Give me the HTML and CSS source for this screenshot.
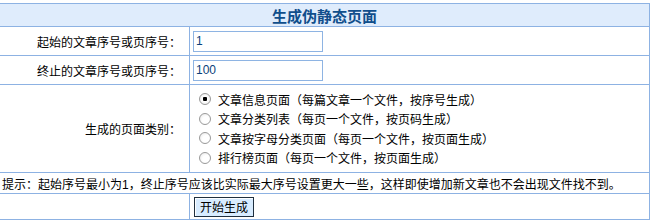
FILE: index.html
```html
<!DOCTYPE html>
<html lang="zh-CN">
<head>
    <meta charset="UTF-8">
    <title>生成伪静态页面</title>
    <link rel="stylesheet" href="styles.css">
</head>
<body>
    <form class="make-form">
        <table class="grid">
            <tr>
                <th colspan="2" class="title">生成伪静态页面</th>
            </tr>
            <tr class="row-field">
                <td class="label">起始的文章序号或页序号：</td>
                <td class="value"><input type="text" class="text" value="1"></td>
            </tr>
            <tr class="row-field">
                <td class="label">终止的文章序号或页序号：</td>
                <td class="value"><input type="text" class="text" value="100"></td>
            </tr>
            <tr class="row-types">
                <td class="label">生成的页面类别：</td>
                <td class="value">
                    <label class="opt"><input type="radio" name="type" checked><span>文章信息页面（每篇文章一个文件，按序号生成）</span></label>
                    <label class="opt"><input type="radio" name="type"><span>文章分类列表（每页一个文件，按页码生成）</span></label>
                    <label class="opt"><input type="radio" name="type"><span>文章按字母分类页面（每页一个文件，按页面生成）</span></label>
                    <label class="opt"><input type="radio" name="type"><span>排行榜页面（每页一个文件，按页面生成）</span></label>
                </td>
            </tr>
            <tr class="row-tip">
                <td colspan="2" class="tip">提示：起始序号最小为1，终止序号应该比实际最大序号设置更大一些，这样即使增加新文章也不会出现文件找不到。</td>
            </tr>
            <tr class="row-submit">
                <td class="label"></td>
                <td class="value"><button type="button" class="btn">开始生成</button></td>
            </tr>
        </table>
    </form>
</body>
</html>
```

FILE: styles.css
```css
body {
    margin: 0;
    padding: 0;
    background-color: #fff;
    font-family: "Liberation Sans", "Noto Sans CJK SC", sans-serif;
    font-size: 12px;
    color: #000;
}
.make-form {
    margin: 0;
}
.grid {
    border-collapse: collapse;
    width: 651px;
    margin: 3px 0 0 -1px;
}
.grid th,
.grid td {
    border: 1px solid #8db2e3;
    padding: 0;
}
.title {
    height: 22px;
    background-color: #dfecfc;
    color: #104e8b;
    font-size: 15px;
    font-weight: bold;
    text-align: center;
}
.label {
    width: 181px;
    padding-right: 8px !important;
    text-align: right;
}
.value {
    padding-left: 3px !important;
    text-align: left;
}
.row-field td {
    height: 28px;
}
.row-types td {
    height: 87px;
}
.row-tip td {
    height: 20px;
}
.row-submit td {
    height: 25px;
}
.text {
    box-sizing: border-box;
    width: 130px;
    height: 21px;
    margin: 0;
    padding: 1px 2px;
    border: 1px solid #8eb4e3;
    font-family: "Liberation Sans", sans-serif;
    font-size: 12px;
    color: #0b3f7a;
    outline: none;
}
.opt {
    display: flex;
    align-items: center;
    height: 19.5px;
    padding-left: 6px;
}
.opt input {
    appearance: none;
    -webkit-appearance: none;
    box-sizing: border-box;
    width: 12px;
    height: 12px;
    margin: 0 7px 0 0;
    border: 1px solid #9a9a9a;
    border-radius: 50%;
    background: radial-gradient(circle at 60% 60%, #fff 40%, #e4e4e4 100%);
}
.opt input:checked {
    background: radial-gradient(circle, #000 0, #000 2px, #fff 2.5px, #e8e8e8 100%);
}
.tip {
    padding-left: 2px !important;
    text-align: left;
}
.btn {
    box-sizing: border-box;
    width: 60px;
    height: 20px;
    margin: 0 0 0 1px;
    padding: 0;
    border: 1px solid #1f2f3f;
    background-color: #d8ecff;
    box-shadow: inset 1px 1px 0 #fff;
    font-family: "Noto Sans CJK SC", sans-serif;
    font-size: 12px;
    color: #000;
    cursor: pointer;
}
```
